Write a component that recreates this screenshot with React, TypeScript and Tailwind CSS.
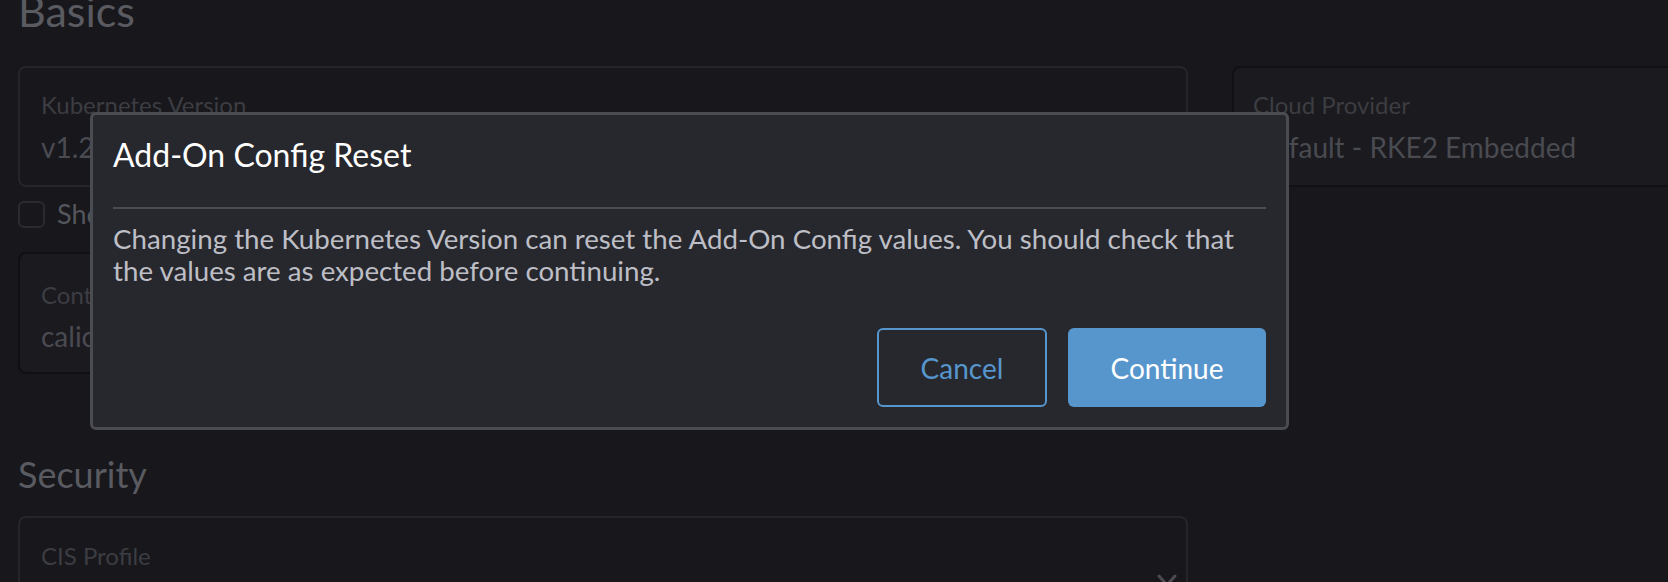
import React from "react";

export default function App() {
  return (
    <div className="relative w-[1668px] h-[582px] overflow-hidden bg-[#17171c] font-['Lato',sans-serif]">
      <div className="pl-[18px]">
        <h2 className="-mt-[11px] text-[43px] leading-[43px] text-[#5a5b61]">Basics</h2>

        <div className="mt-[34px] flex gap-[44px]">
          <div className="w-[1170px] h-[121px] shrink-0 rounded-[8px] border-2 border-[#25262b] pl-[21px] pt-[23px]">
            <div className="text-[24px] leading-[28px] text-[#3c3d42]">Kubernetes Version</div>
            <div className="mt-[12px] text-[28px] leading-[32px] text-[#4a4b51]">v1.29.4+rke2r1</div>
          </div>
          <div className="w-[600px] h-[121px] shrink-0 rounded-[8px] border-2 border-[#111115] bg-[#1a1a1f] pl-[19px] pt-[23px]">
            <div className="text-[24px] leading-[28px] text-[#3c3d42]">Cloud Provider</div>
            <div className="mt-[12px] text-[28px] leading-[32px] text-[#4a4b51]">Default - RKE2 Embedded</div>
          </div>
        </div>

        <div className="mt-[12px] flex items-center gap-[12px]">
          <div className="w-[27px] h-[27px] rounded-[6px] border-2 border-[#2a2b30]" />
          <span className="text-[27px] leading-[30px] text-[#55565c]">Show deprecated Kubernetes patch versions</span>
        </div>

        <div className="mt-[23px] w-[380px] h-[122px] rounded-[8px] border-2 border-[#101013] bg-[#1a1a1f] pl-[21px] pt-[27px]">
          <div className="text-[24px] leading-[28px] text-[#3c3d42]">Container Network</div>
          <div className="mt-[11px] text-[28px] leading-[32px] text-[#4a4b51]">calico</div>
        </div>

        <h2 className="mt-[78px] text-[36px] leading-[44px] text-[#5a5b61]">Security</h2>

        <div className="mt-[20px] w-[1170px] h-[120px] rounded-[8px] border-2 border-[#25262b] pl-[21px] pr-[9px] pt-[24px] flex justify-between items-start">
          <div className="text-[24px] leading-[28px] text-[#3c3d42]">CIS Profile</div>
          <svg width="20" height="14" viewBox="0 0 20 14" className="mt-[32px]">
            <polyline points="2,2 10,11 18,2" fill="none" stroke="#4a4a50" strokeWidth="3" strokeLinecap="round" strokeLinejoin="round" />
          </svg>
        </div>
      </div>

      <div className="absolute left-[90px] top-[112px] w-[1199px] h-[318px] rounded-[6px] border-[3px] border-[#4b4c52] bg-[#27282d] px-[20px] pt-[20px] pb-[20px] flex flex-col">
        <div className="text-[32px] leading-[40px] text-white">Add-On Config Reset</div>
        <div className="mt-[32px] h-[2px] bg-[#4b4c52]" />
        <p className="mt-[14px] text-[27.7px] leading-[32px] text-[#bdbec6]">
          Changing the Kubernetes Version can reset the Add-On Config values. You should check that the values are as expected before continuing.
        </p>
        <div className="mt-auto flex justify-end gap-[21px]">
          <button className="w-[170px] h-[79px] rounded-[6px] border-2 border-[#5696cd] text-[28px] text-[#5696cd]">Cancel</button>
          <button className="w-[198px] h-[79px] rounded-[6px] bg-[#5696cd] text-[28px] text-white">Continue</button>
        </div>
      </div>
    </div>
  );
}
